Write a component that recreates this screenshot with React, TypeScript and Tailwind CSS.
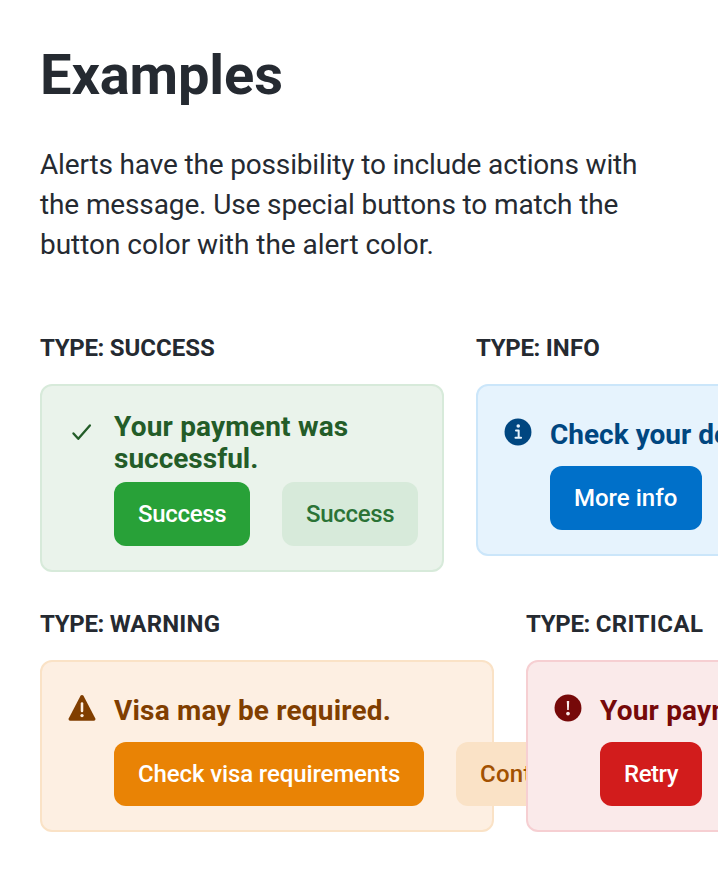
import React from "react";

type Tone = {
  label: string; labelCls: string; title: React.ReactNode; box: string; card: string; titleCls: string;
  icon: React.ReactNode; buttons: { text: string; cls: string }[];
};

const Check = () => (
  <svg viewBox="0 0 24 24" className="size-8">
    <path d="M5.6 13.1l3.6 4L17.9 7.1" fill="none" stroke="#235C28" strokeWidth="1.75" strokeLinecap="round" strokeLinejoin="round" />
  </svg>
);
const Info = () => (
  <svg viewBox="0 0 24 24" className="size-8">
    <circle cx="12" cy="12" r="10.1" fill="#004680" />
    <circle cx="12.2" cy="7.5" r="1.35" fill="#E6F3FD" />
    <path d="M10.5 10.8h2v5.5M10.1 16.4h4.2" fill="none" stroke="#E6F3FD" strokeWidth="1.5" strokeLinecap="round" strokeLinejoin="round" />
  </svg>
);
const Warn = () => (
  <svg viewBox="0 0 24 24" className="size-8">
    <path d="M10.9 2.8a1.3 1.3 0 0 1 2.2 0l8.8 16.9c.5 1 0 1.8-1.1 1.8H3.2c-1.1 0-1.6-.8-1.1-1.8z" fill="#803E00" />
    <path d="M12 8.6v5.6" stroke="#FDEFE2" strokeWidth="1.9" strokeLinecap="round" />
    <circle cx="12" cy="17.7" r="1.25" fill="#FDEFE2" />
  </svg>
);
const Critical = () => (
  <svg viewBox="0 0 24 24" className="size-8">
    <circle cx="12" cy="12" r="10.1" fill="#760909" />
    <path d="M11.1 6.8h1.8l-.3 6.7h-1.200z" fill="#FAEAEA" />
    <circle cx="12" cy="16.2" r="1.4" fill="#FAEAEA" />
  </svg>
);

const rows: Tone[][] = [
  [
    { label: "SUCCESS", labelCls: "", title: <><span className="tracking-[0.2px]">Your payment was</span><br />successful.</>, box: "w-[404px]", card: "h-[188px] bg-[#EAF3EB] border-[#D7EADA]", titleCls: "pt-[25px] mb-[7px] text-[#235C28]", icon: <Check />,
      buttons: [{ text: "Success", cls: "w-[136px] tracking-[-0.3px] bg-[#28A138] text-white" }, { text: "Success", cls: "w-[136px] tracking-[-0.3px] bg-[#D7EADA] text-[#2B7336]" }] },
    { label: "INFO", labelCls: "tracking-[0.2px]", title: "Check your details.", box: "w-[404px]", card: "h-[172px] bg-[#E6F3FD] border-[#CBE6FA]", titleCls: "pt-[33px] mb-[15px] text-[#004680]", icon: <Info />,
      buttons: [{ text: "More info", cls: "w-[152px] bg-[#0070C9] text-white" }] },
  ],
  [
    { label: "WARNING", labelCls: "tracking-[0.2px]", title: "Visa may be required.", box: "w-[454px]", card: "h-[172px] bg-[#FDEFE2] border-[#FAE2C6]", titleCls: "pt-[33px] mb-[15px] tracking-[0.2px] text-[#803E00]", icon: <Warn />,
      buttons: [{ text: "Check visa requirements", cls: "w-[310px] tracking-[-0.12px] bg-[#E98305] text-white" }, { text: "Continue", cls: "w-[150px] tracking-[0.25px] bg-[#FAE2C6] text-[#A25100]" }] },
    { label: "CRITICAL", labelCls: "tracking-[0.4px]", title: "Your payment failed.", box: "w-[404px]", card: "h-[172px] bg-[#FAEAEA] border-[#F6CFD2]", titleCls: "pt-[33px] mb-[15px] tracking-[0.2px] text-[#760909]", icon: <Critical />,
      buttons: [{ text: "Retry", cls: "w-[102px] tracking-[-0.45px] bg-[#D21C1C] text-white" }] },
  ],
];

function Alert({ item }: { item: Tone }) {
  return (
    <section className={`shrink-0 ${item.box}`}>
      <h2 className="h-8 text-[24px] leading-8 font-bold whitespace-nowrap">
        <span className="tracking-[-0.33px]">TYPE: </span>
        <span className={item.labelCls}>{item.label}</span>
      </h2>
      <div className={`mt-5 flex rounded-xl border-2 pl-6 ${item.card}`}>
        <div className="mr-4 shrink-0 pt-[30px]">{item.icon}</div>
        <div className="min-w-0">
          <p className={`text-[28px] leading-8 font-bold whitespace-nowrap ${item.titleCls}`}>{item.title}</p>
          <div className="flex gap-8">
            {item.buttons.map((b, i) => (
              <button key={i} className={`h-16 shrink-0 rounded-xl pl-6 text-left text-[24px] font-medium whitespace-nowrap ${b.cls}`}>{b.text}</button>
            ))}
          </div>
        </div>
      </div>
    </section>
  );
}

export default function App() {
  return (
    <main className="h-[872px] w-full overflow-hidden bg-white px-10 pt-10 font-[Roboto,sans-serif] text-[#252A31]">
      <h1 className="h-[70px] text-[56px] leading-[70px] font-bold tracking-[-0.12px]">Examples</h1>
      <p className="mt-[35px] text-[28px] leading-10 whitespace-nowrap">
        <span className="tracking-[-0.155px]">Alerts have the possibility to include actions with</span><br />
        <span className="tracking-[-0.125px]">the message. Use special buttons to match the</span><br />
        <span className="tracking-[-0.03px]">button color with the alert color.</span>
      </p>
      <div className="mt-[67px] flex h-[240px] gap-8">{rows[0].map((a) => <Alert key={a.label} item={a} />)}</div>
      <div className="mt-9 flex gap-8">{rows[1].map((a) => <Alert key={a.label} item={a} />)}</div>
    </main>
  );
}
